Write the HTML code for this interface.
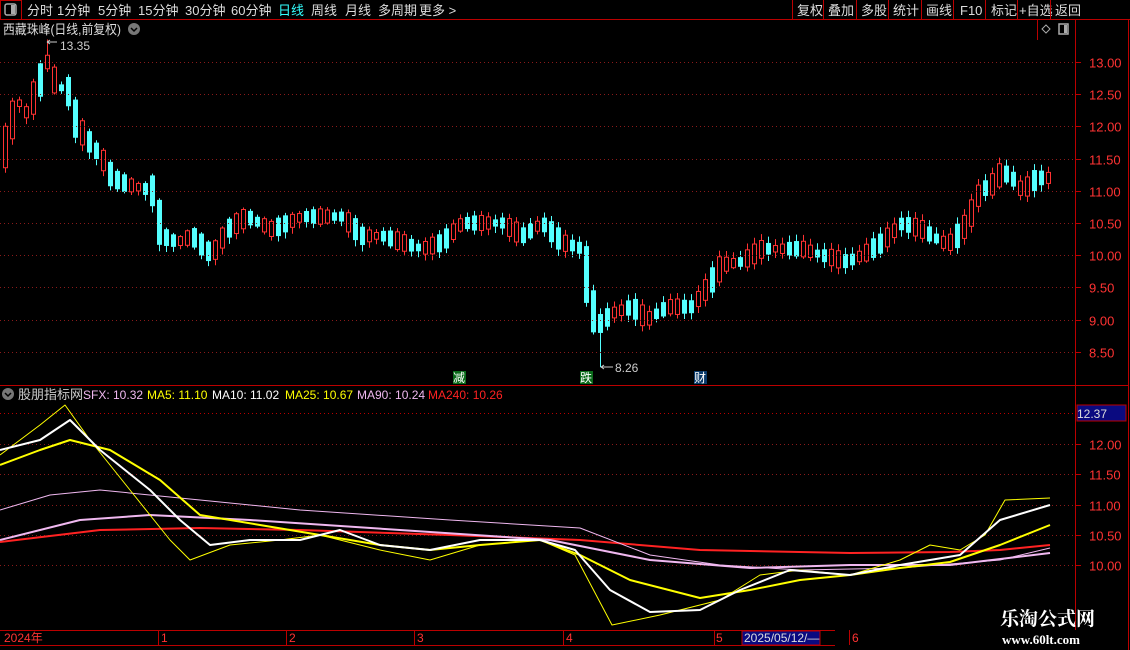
<!DOCTYPE html>
<html><head><meta charset="utf-8">
<style>
html,body{margin:0;padding:0;background:#000;width:1130px;height:650px;overflow:hidden;font-family:"Liberation Sans","Noto Sans CJK SC",sans-serif;}
</style></head><body>
<svg id="s" width="1130" height="650" style="position:absolute;left:0;top:0" font-family="Liberation Sans, Noto Sans CJK SC, sans-serif">
<line x1="0" y1="19.5" x2="1130" y2="19.5" stroke="#b00" />
<rect x="0.5" y="0.5" width="21" height="19" fill="none" stroke="#b00"/>
<rect x="5" y="4" width="11" height="11" rx="2" fill="none" stroke="#aaa" stroke-width="1.5"/>
<rect x="11" y="5" width="4" height="9" fill="#aaa"/>
<g id="candles"></g>
<g font-size="13" fill="#ddd">
<text x="27" y="15">分时</text><text x="57" y="15">1分钟</text><text x="98" y="15">5分钟</text><text x="138" y="15">15分钟</text><text x="185" y="15">30分钟</text><text x="231" y="15">60分钟</text>
<text x="278" y="15" fill="#3ff">日线</text><text x="311" y="15">周线</text><text x="345" y="15">月线</text><text x="378" y="15">多周期</text><text x="419" y="15">更多 &gt;</text>
<text x="797" y="15">复权</text><text x="828" y="15">叠加</text><text x="861" y="15">多股</text><text x="893" y="15">统计</text><text x="926" y="15">画线</text><text x="960" y="15">F10</text><text x="991" y="15">标记</text><text x="1019" y="15">+自选</text><text x="1055" y="15">返回</text>
</g>
<g stroke="#b00"><line x1="792.5" y1="0" x2="792.5" y2="19"/><line x1="823.5" y1="0" x2="823.5" y2="19"/><line x1="856.5" y1="0" x2="856.5" y2="19"/><line x1="888.5" y1="0" x2="888.5" y2="19"/><line x1="921.5" y1="0" x2="921.5" y2="19"/><line x1="953.5" y1="0" x2="953.5" y2="19"/><line x1="985.5" y1="0" x2="985.5" y2="19"/><line x1="1017.5" y1="0" x2="1017.5" y2="19"/><line x1="1050.5" y1="0" x2="1050.5" y2="19"/>
<line x1="1037.5" y1="19" x2="1037.5" y2="40"/><line x1="1075.5" y1="19" x2="1075.5" y2="630"/><line x1="1128.5" y1="19" x2="1128.5" y2="650"/>
<line x1="0" y1="385.5" x2="1128" y2="385.5"/>
<line x1="0" y1="630.5" x2="835" y2="630.5"/><line x1="0" y1="645.5" x2="835" y2="645.5"/>
</g>
<text x="3" y="34" font-size="13" fill="#ddd" textLength="118" lengthAdjust="spacingAndGlyphs">西藏珠峰(日线,前复权)</text>
<circle cx="134" cy="29" r="6" fill="#777"/><path d="M131 28l3 3 3-3" stroke="#000" stroke-width="1.5" fill="none"/>
<path d="M1046 25l4 4-4 4-4-4z" fill="none" stroke="#aaa"/>
<rect x="1059" y="24" width="9" height="10" fill="none" stroke="#aaa" stroke-width="1.5"/><rect x="1064" y="25" width="3" height="8" fill="#aaa"/>
<g id="grid" stroke="#8a1a1a" stroke-dasharray="1,3"></g>
<g id="axis" font-size="13" fill="#f33"></g>
<text x="60" y="50" font-size="12" fill="#ccc">13.35</text><path d="M47 42h10M47 42l3-2M47 42l3 2" stroke="#ccc" fill="none"/>
<path d="M601 367h12M601 367l3-2M601 367l3 2" stroke="#ccc" fill="none"/><text x="615" y="372" font-size="12" fill="#ccc">8.26</text>
<rect x="453" y="371" width="13" height="13" fill="#0a6a1a"/><text x="453" y="382" font-size="12" fill="#fff">减</text>
<rect x="580" y="371" width="13" height="13" fill="#0a6a1a"/><text x="580" y="382" font-size="12" fill="#fff">跌</text>
<rect x="694" y="371" width="13" height="13" fill="#0a3a6a"/><text x="694" y="382" font-size="12" fill="#fff">财</text>
<circle cx="8" cy="394" r="6" fill="#777"/><path d="M5 393l3 3 3-3" stroke="#000" stroke-width="1.5" fill="none"/>
<g font-size="12"><text x="18" y="399" font-size="13" fill="#ccc">股朋指标网</text>
<text x="83" y="399" fill="#f0b8f0">SFX: 10.32</text><text x="147" y="399" fill="#ff0">MA5: 11.10</text><text x="212" y="399" fill="#fff">MA10: 11.02</text><text x="285" y="399" fill="#ff0">MA25: 10.67</text><text x="357" y="399" fill="#f0b8f0">MA90: 10.24</text><text x="428" y="399" fill="#f22">MA240: 10.26</text></g>
<rect x="1077" y="405" width="49" height="16" fill="#0a0a80" stroke="#b00"/><text x="1077" y="418" font-size="12" fill="#ddd">12.37</text>
<g fill="none" stroke-linejoin="round">
<polyline stroke="#f22" stroke-width="2" points="0,542 100,530 200,528 300,530 450,535 580,540 700,550 850,553 950,552 1000,550 1050,545"/>
<polyline stroke="#f0b8f0" stroke-width="1" points="0,510 50,495 100,490 200,500 300,510 450,520 580,528 650,555 720,565 800,570 900,568 1000,560 1050,548"/>
<polyline stroke="#f0b8f0" stroke-width="2" points="0,540 80,520 150,515 250,520 400,530 550,540 650,560 750,568 850,565 950,565 1050,553"/>
<polyline stroke="#ff0" stroke-width="2" points="0,465 40,450 70,440 110,450 160,480 200,515 260,525 320,535 380,545 430,550 480,545 540,540 580,555 630,580 700,598 750,590 800,580 850,575 900,568 950,562 1000,545 1050,525"/>
<polyline stroke="#ff0" stroke-width="1" points="0,455 40,425 65,405 90,440 130,490 170,540 190,560 230,545 280,540 320,535 380,550 430,560 480,545 540,540 575,555 612,625 660,615 720,600 760,575 800,570 850,575 900,560 930,545 960,550 985,535 1005,500 1050,498"/>
<polyline stroke="#fff" stroke-width="2" points="0,450 40,440 70,420 100,450 150,490 180,520 210,545 250,540 300,540 340,530 380,545 430,550 480,540 540,540 575,550 610,590 650,612 700,610 740,590 790,570 850,575 900,565 960,555 1000,520 1050,505"/>
</g>
<text x="4" y="642" font-size="12" fill="#f33">2024年</text>
<g stroke="#b00"><line x1="158.5" y1="630" x2="158.5" y2="645"/><line x1="286.5" y1="630" x2="286.5" y2="645"/><line x1="414.5" y1="630" x2="414.5" y2="645"/><line x1="563.5" y1="630" x2="563.5" y2="645"/><line x1="714.5" y1="630" x2="714.5" y2="645"/><line x1="849.5" y1="630" x2="849.5" y2="645"/></g>
<g font-size="12" fill="#f33"><text x="161" y="642">1</text><text x="289" y="642">2</text><text x="417" y="642">3</text><text x="566" y="642">4</text><text x="716" y="642">5</text><text x="852" y="642">6</text></g>
<rect x="742" y="631" width="78" height="14" fill="#0a0a80" stroke="#b00"/><text x="744" y="642" font-size="12" fill="#ddd">2025/05/12/—</text>
<text x="1000" y="625" font-size="19" font-weight="bold" fill="#fff" font-family="Noto Serif CJK SC, serif">乐淘公式网</text>
<text x="1002" y="644" font-size="13" font-weight="bold" fill="#fff" font-family="Liberation Serif, serif">www.60lt.com</text>
</svg>
<script>
(function(){
var NS="http://www.w3.org/2000/svg";
function el(t,a,p){var e=document.createElementNS(NS,t);for(var k in a)e.setAttribute(k,a[k]);document.getElementById(p).appendChild(e);return e;}
function yu(p){return 62+(13-p)*64.4;}
function yl(v){return 565-(v-10)*60.5;}
[13,12.5,12,11.5,11,10.5,10,9.5,9,8.5].forEach(function(p){var y=Math.round(yu(p))+0.5;el('line',{x1:0,y1:y,x2:1075,y2:y},'grid');el('line',{x1:1075,y1:y,x2:1081,y2:y,stroke:'#b00','stroke-dasharray':'none'},'grid');el('text',{x:1089,y:y+5},'axis').textContent=p.toFixed(2);});
[12,11.5,11,10.5,10].forEach(function(p){var y=Math.round(yl(p))+0.5;el('line',{x1:0,y1:y,x2:1075,y2:y},'grid');el('line',{x1:1075,y1:y,x2:1081,y2:y,stroke:'#b00','stroke-dasharray':'none'},'grid');el('text',{x:1089,y:y+5},'axis').textContent=p.toFixed(2);});
el('line',{x1:0,y1:413.5,x2:1075,y2:413.5,stroke:'#b00'},'grid');
var K=[[5,11.8],[15,12.4],[25,12.2],[35,12.6],[45,13.0],[55,12.6],[65,12.6],[75,12.0],[85,11.8],[100,11.5],[110,11.2],[125,11.1],[150,11.0],[160,10.3],[175,10.2],[190,10.3],[210,10.0],[225,10.4],[245,10.6],[270,10.4],[300,10.6],[320,10.6],[340,10.6],[360,10.3],[380,10.3],[400,10.2],[420,10.1],[440,10.2],[460,10.5],[480,10.5],[500,10.5],[520,10.3],[540,10.5],[560,10.2],[580,10.1],[588,9.3],[595,8.9],[610,9.1],[630,9.2],[645,9.0],[665,9.2],[690,9.2],[705,9.5],[720,9.85],[740,9.9],[760,10.1],[780,10.1],[800,10.1],[820,10.0],[845,9.9],[860,10.0],[880,10.2],[900,10.5],[920,10.4],[940,10.2],[950,10.2],[965,10.5],[978,11.0],[990,11.1],[1000,11.3],[1010,11.2],[1020,11.0],[1035,11.2],[1050,11.2]];
function P(x){for(var i=0;i<K.length-1;i++){if(x<=K[i+1][0]){var t=(x-K[i][0])/(K[i+1][0]-K[i][0]);return K[i][1]+t*(K[i+1][1]-K[i][1]);}}return K[K.length-1][1];}
for(var x=3;x<=1050;x+=7){
var m=P(x),slope=P(x+3.5)-P(x-3.5);
var amp=0.04+0.08*Math.abs(Math.sin(x*0.37))+Math.abs(slope)*0.5;
var d=(Math.sin(x*1.13)+slope*3)>0?1:-1;
var o=m-d*amp,c=m+d*amp;
var hi=Math.max(o,c)+0.02+0.08*Math.abs(Math.sin(x*0.9));var lo=Math.min(o,c)-0.02-0.08*Math.abs(Math.cos(x*1.3));
if(x>=597&&x<=604){lo=8.26;}
if(x>=45&&x<=48){hi=13.35;}
var up=c>=o;var col=up?'#ff3232':'#54ffff';var ty=yu(Math.max(o,c)),by=yu(Math.min(o,c));if(by-ty<1)by=ty+1;
el('line',{x1:x+2.5,y1:yu(hi),x2:x+2.5,y2:yu(lo),stroke:col},'candles');
if(up)el('rect',{x:x+0.5,y:ty,width:4,height:by-ty,fill:'#000',stroke:col},'candles');else el('rect',{x:x,y:ty,width:5,height:by-ty,fill:col},'candles');
}
})();
</script>
</body></html>
